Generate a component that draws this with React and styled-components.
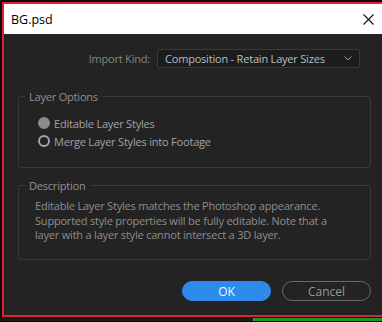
import React from 'react';
import styled, { createGlobalStyle } from 'styled-components';

const GlobalStyle = createGlobalStyle`
  html, body {
    margin: 0;
    padding: 0;
    background: #0c0c0c;
    overflow: hidden;
  }
  body {
    width: 382px;
    height: 322px;
    padding: 2px 0 0 2px;
    box-sizing: border-box;
    font-family: "Open Sans", "Noto Sans", sans-serif;
  }
`;

const Window = styled.div`
  width: 382px;
  height: 315px;
  box-sizing: border-box;
  border: 2px solid #e3202f;
  border-right: none;
  background: #232323;
  display: flex;
  flex-direction: column;
`;

const TitleBar = styled.div`
  height: 30px;
  flex: none;
  background: #ffffff;
  display: flex;
  align-items: center;
  justify-content: space-between;
  padding: 0 10px 0 7px;
  font-size: 12.5px;
  color: #000;
`;

const CloseIcon = () => (
  <svg width="11" height="11" viewBox="0 0 11 11">
    <path d="M0.5 0.5 L10.5 10.5 M10.5 0.5 L0.5 10.5" stroke="#111" strokeWidth="1.1" fill="none" />
  </svg>
);

const Content = styled.div`
  flex: 1;
  display: flex;
  flex-direction: column;
  padding: 15px 13px 0 14px;
  font-size: 11px;
  letter-spacing: -0.2px;
`;

const ImportRow = styled.div`
  display: flex;
  align-items: center;
  justify-content: flex-end;
  gap: 7px;
  padding-right: 11px;
`;

const Label = styled.span`
  color: #868686;
`;

const Select = styled.div`
  width: 203px;
  height: 19px;
  box-sizing: border-box;
  background: #1c1c1c;
  border: 1px solid #3a3a3a;
  border-radius: 2px;
  display: flex;
  align-items: center;
  justify-content: space-between;
  padding: 0 7px 0 7px;
  color: #b5bfca;
  white-space: nowrap;
`;

const Group = styled.fieldset`
  margin: ${p => p.$top}px 0 0 0;
  padding: ${p => p.$padTop}px 0 0 6px;
  height: ${p => p.$height}px;
  box-sizing: border-box;
  border: 1px solid #393939;
  border-radius: 3px;
  min-width: 0;
`;

const Legend = styled.legend`
  padding: 0 4px;
  color: #929292;
`;

const RadioRow = styled.div`
  display: flex;
  align-items: center;
  gap: 4px;
  height: 18px;
  margin-left: 13px;
  color: #a3a3a3;
`;

const Radio = styled.span`
  width: 12px;
  height: 12px;
  box-sizing: border-box;
  border-radius: 50%;
  border: 2px solid ${p => (p.$checked ? '#8b8b8b' : '#a4a4a4')};
  background: ${p => (p.$checked ? '#8b8b8b' : 'transparent')};
`;

const DescText = styled.p`
  margin: 0 0 0 10px;
  line-height: 14.5px;
  color: #8e8e8e;
`;

const Buttons = styled.div`
  display: flex;
  justify-content: flex-end;
  gap: 11px;
  margin-top: 21px;
`;

const Button = styled.div`
  width: 89px;
  height: 20px;
  box-sizing: border-box;
  border-radius: 10px;
  display: flex;
  align-items: center;
  justify-content: center;
  font-size: 12px;
  letter-spacing: 0;
  background: ${p => (p.$primary ? '#2d8ceb' : 'transparent')};
  border: 1px solid ${p => (p.$primary ? '#2d8ceb' : '#6a6a6a')};
  color: ${p => (p.$primary ? '#f2f6fb' : '#989898')};
`;

const Taskbar = styled.div`
  display: flex;
  margin-top: 1px;
  height: 3px;
`;

const TaskLeft = styled.div`
  width: 251px;
  background: #1a1a1a;
`;

const TaskRight = styled.div`
  flex: 1;
  background: #139a1f;
  border-left: 1px solid #5a8fc8;
`;

export default function App() {
  return (
    <>
      <GlobalStyle />
      <Window>
        <TitleBar>
          <span>BG.psd</span>
          <CloseIcon />
        </TitleBar>
        <Content>
          <ImportRow>
            <Label>Import Kind:</Label>
            <Select>
              <span>Composition - Retain Layer Sizes</span>
              <svg width="8" height="5" viewBox="0 0 8 5">
                <path d="M0.5 0.5 L4 4 L7.5 0.5" stroke="#9a9a9a" strokeWidth="1" fill="none" />
              </svg>
            </Select>
          </ImportRow>

          <Group $top={21} $height={79} $padTop={10}>
            <Legend>Layer Options</Legend>
            <RadioRow>
              <Radio $checked />
              <span>Editable Layer Styles</span>
            </RadioRow>
            <RadioRow>
              <Radio />
              <span>Merge Layer Styles into Footage</span>
            </RadioRow>
          </Group>

          <Group $top={10} $height={82} $padTop={6}>
            <Legend>Description</Legend>
            <DescText>
              Editable Layer Styles matches the Photoshop appearance.
              <br />
              Supported style properties will be fully editable. Note that a
              <br />
              layer with a layer style cannot intersect a 3D layer.
            </DescText>
          </Group>

          <Buttons>
            <Button $primary>OK</Button>
            <Button>Cancel</Button>
          </Buttons>
        </Content>
      </Window>
      <Taskbar>
        <TaskLeft />
        <TaskRight />
      </Taskbar>
    </>
  );
}
